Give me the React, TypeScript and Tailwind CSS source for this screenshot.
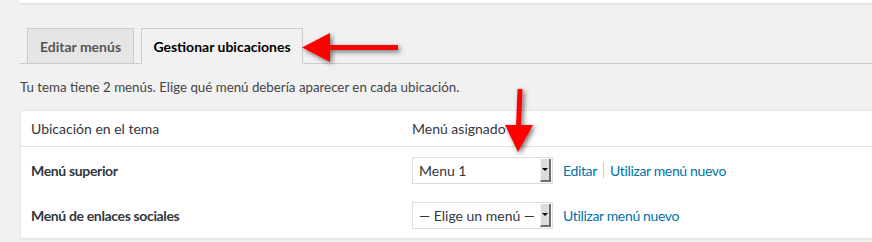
export default function App() {
  const font = { fontFamily: 'Lato, "Open Sans", sans-serif' };
  return (
    <div
      className="relative w-[872px] h-[242px] overflow-hidden bg-[#f1f1f1] pl-5 text-[#444]"
      style={font}
    >
      {/* top box */}
      <div className="h-[4px] w-[860px] bg-white border-b border-[#e2e2e2] shadow-[0_1px_1px_rgba(0,0,0,0.04)]" />

      {/* tabs */}
      <div className="mt-[24px] flex gap-[7px] pl-[7px] border-b border-[#ccc] w-[860px]">
        <div className="-mb-px h-[36px] w-[107px] flex items-center justify-center border border-[#ccc] bg-[#e5e5e5] text-[14px] font-bold text-[#555]">
          Editar menús
        </div>
        <div className="-mb-px h-[36px] w-[162px] flex items-center justify-center border border-[#ccc] border-b-[#f1f1f1] bg-[#f1f1f1] text-[14px] font-bold text-black">
          Gestionar ubicaciones
        </div>
      </div>

      <p className="mt-[13px] text-[13.3px] leading-[20px] text-[#444]">
        Tu tema tiene 2 menús. Elige qué menú debería aparecer en cada ubicación.
      </p>

      {/* table */}
      <div className="mt-[13px] w-[870px] bg-white border border-[#e5e5e5] shadow-[0_1px_1px_rgba(0,0,0,0.04)] text-[14px] text-[#32373c]">
        <div className="h-[36px] flex items-center border-b border-[#e1e1e1]">
          <div className="w-[391px] pl-[10px]">Ubicación en el tema</div>
          <div>Menú asignado</div>
        </div>
        <Row label="Menú superior" value="Menu 1" edit h="h-[46px]" />
        <Row label="Menú de enlaces sociales" value="— Elige un menú —" h="h-[45px]" />
      </div>

      {/* red arrows */}
      <svg className="absolute left-0 top-0 pointer-events-none" width="872" height="242">
        <defs>
          <filter id="sh" x="-30%" y="-30%" width="160%" height="160%">
            <feDropShadow dx="2" dy="2" stdDeviation="2.5" floodColor="#000" floodOpacity="0.55" />
          </filter>
        </defs>
        <g filter="url(#sh)" fill="#ff0000">
          <rect x="328" y="45" width="70" height="5" />
          <polygon points="302,47.5 330,33 330,62" />
          <polygon points="517.5,89 522.5,89 521,127 516,127" />
          <polygon points="505,125 533,125 518,152" />
        </g>
      </svg>
    </div>
  );
}

function Row({ label, value, edit, h }: { label: string; value: string; edit?: boolean; h: string }) {
  return (
    <div className={`${h} flex items-center`}>
      <div className="w-[391px] pl-[10px] font-bold tracking-[-0.35px] text-[#32373c]">{label}</div>
      <div className="relative w-[141px] h-[27px] border border-[#ddd] bg-white flex items-center pl-[6px] text-[14px] text-[#32373c]">
        <span className="whitespace-nowrap">{value}</span>
        <div className="absolute right-[1px] top-[1px] bottom-[1px] w-[11px] bg-[#dcdcdc] border-l border-[#f6f6f6] border-r-2 border-b-2 border-r-[#6d6d6d] border-b-[#6d6d6d] flex items-center justify-center">
          <div className="w-0 h-0 border-l-[3px] border-r-[3px] border-t-[3px] border-l-transparent border-r-transparent border-t-black" />
        </div>
      </div>
      <div className="ml-[10px] flex items-center text-[14px] tracking-[-0.35px] text-[#0073aa]">
        {edit && (
          <>
            <span>Editar</span>
            <span className="mx-[6px] h-[16px] w-px bg-[#ccc]" />
          </>
        )}
        <span>Utilizar menú nuevo</span>
      </div>
    </div>
  );
}
